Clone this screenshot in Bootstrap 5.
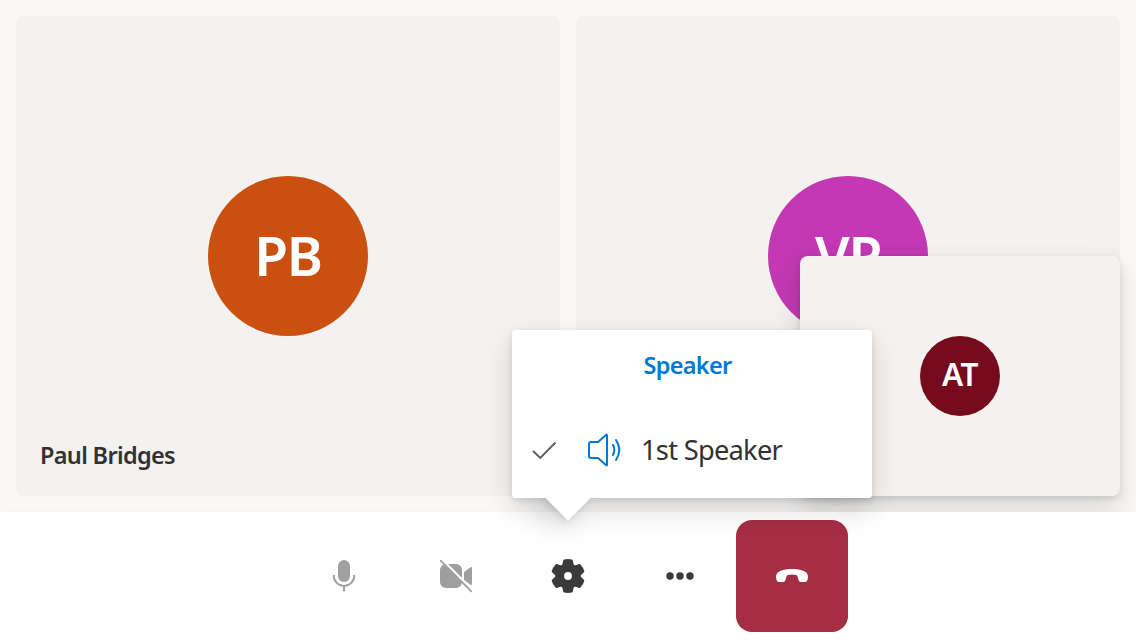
<!DOCTYPE html>
<html lang="en">
<head>
<meta charset="utf-8">
<meta name="viewport" content="width=device-width, initial-scale=1">
<title>Call</title>
<link href="https://cdn.jsdelivr.net/npm/bootstrap@5.3.0/dist/css/bootstrap.min.css" rel="stylesheet">
<style>
body{font-family:"Noto Sans","Open Sans",sans-serif;background:#faf9f8;color:#323130;line-height:1}
.stage{height:512px;padding:16px;gap:16px}
.tile{background:#f3f2f1;border-radius:8px}
.avatar{width:160px;height:160px;color:#fff;font-size:55px;font-weight:580;letter-spacing:-1.2px}
.avatar span{position:relative;top:-2px}
.avatar-pb{background:#ca5010}
.avatar-vp{background:#c239b3}
.avatar-at{background:#750b1c;width:80px;height:80px;font-size:31.5px;letter-spacing:-.5px}
.tile-name{left:24px;bottom:29px;font-size:23.5px;font-weight:560;letter-spacing:-.67px;white-space:nowrap}
.self-view{right:16px;top:256px;width:320px;height:240px;box-shadow:0 12.8px 28.8px rgba(0,0,0,.132),0 2.4px 7.2px rgba(0,0,0,.108)}
.controls{height:128px;background:#fff;box-shadow:0 6.4px 14.4px rgba(0,0,0,.06)}
.call-btn{width:112px;height:112px;border:0;border-radius:16px;background:none;padding:0}
.hangup{background:#a42e43}
.callout{left:512px;top:330px;width:360px;height:168px;background:#fff;border-radius:4px;box-shadow:0 12.8px 28.8px rgba(0,0,0,.132),0 2.4px 7.2px rgba(0,0,0,.108)}
.beak{width:32px;height:32px;left:40px;bottom:-16px;background:#fff;transform:rotate(45deg);box-shadow:inherit}
.callout-body{background:#fff;border-radius:4px}
.callout-title{height:72px;font-size:23.5px;font-weight:560;color:#0078d4;letter-spacing:-.7px;padding-right:9px}
.device{height:72px;margin-top:12px;font-size:27.3px;letter-spacing:-.75px}
.device span{padding-left:1px}
</style>
</head>
<body class="overflow-hidden">
<main class="position-relative vh-100 d-flex flex-column">
  <section class="stage d-flex">
    <div class="tile flex-fill d-flex align-items-center justify-content-center position-relative">
      <div class="avatar avatar-pb rounded-circle d-flex align-items-center justify-content-center"><span>PB</span></div>
      <div class="tile-name position-absolute">Paul Bridges</div>
    </div>
    <div class="tile flex-fill d-flex align-items-center justify-content-center">
      <div class="avatar avatar-vp rounded-circle d-flex align-items-center justify-content-center"><span>VP</span></div>
    </div>
  </section>
  <div class="tile self-view position-absolute d-flex align-items-center justify-content-center">
    <div class="avatar avatar-at rounded-circle d-flex align-items-center justify-content-center"><span>AT</span></div>
  </div>
  <nav class="controls position-relative d-flex align-items-center justify-content-center" aria-label="Call controls">
    <button class="call-btn d-flex align-items-center justify-content-center" aria-label="Microphone">
      <svg width="40" height="40" fill="#a19f9d"><rect x="14" y="4" width="12" height="22" rx="6"/><path d="M9.8 19v.7a10.2 10.2 0 0 0 20.4 0V19M20 30v5.6" fill="none" stroke="#a19f9d" stroke-width="1.9"/></svg>
    </button>
    <button class="call-btn d-flex align-items-center justify-content-center" aria-label="Camera">
      <svg width="40" height="40" fill="#a19f9d"><rect x="4" y="8" width="22" height="24" rx="6"/><path d="M28 16 34.5 11.2Q36 10.4 36 12V28Q36 29.6 34.5 28.8L28 24Z"/><path d="M6 4 37 35" stroke="#fff" stroke-width="3"/><path d="M4.7 4.7 35.3 35.3" stroke="#a19f9d" stroke-width="1.8" stroke-linecap="round"/></svg>
    </button>
    <button class="call-btn d-flex align-items-center justify-content-center" aria-label="Settings">
      <svg width="40" height="40" viewBox="-20 -20 40 40" fill="#3b3a39">
        <defs><path id="tooth" d="M-6.500-10.500Q-5.700-11.200-5.500-12.200L-4.800-15.600Q-4.600-16.400-3.800-16.600Q0-17.400 3.800-16.600Q4.600-16.400 4.800-15.600L5.500-12.200Q5.700-11.200 6.500-10.500V-8H-6.500Z"/></defs>
        <circle r="8" fill="none" stroke="#3b3a39" stroke-width="8.2"/>
        <use href="#tooth"/><use href="#tooth" transform="rotate(60)"/><use href="#tooth" transform="rotate(120)"/><use href="#tooth" transform="rotate(180)"/><use href="#tooth" transform="rotate(240)"/><use href="#tooth" transform="rotate(300)"/>
      </svg>
    </button>
    <button class="call-btn d-flex align-items-center justify-content-center" aria-label="More">
      <svg width="40" height="40" fill="#3b3a39"><circle cx="10" cy="20" r="3.7"/><circle cx="20" cy="20" r="3.7"/><circle cx="30" cy="20" r="3.7"/></svg>
    </button>
    <button class="call-btn hangup d-flex align-items-center justify-content-center" aria-label="Leave">
      <svg width="40" height="40" fill="#fff"><path d="M4 20.500C4 15.200 11.500 13 20 13S36 15.200 36 20.500C36 24 35 26 32.700 26H29Q27 26 26.500 24L25.600 20.500Q25.200 19.200 24 18.900Q20 18 16 18.900Q14.800 19.200 14.400 20.500L13.500 24Q13 26 11 26H7.300C5 26 4 24 4 20.500Z"/></svg>
    </button>
  </nav>
  <div class="callout position-absolute">
    <div class="beak position-absolute"></div>
    <div class="callout-body position-relative h-100">
      <div class="callout-title d-flex align-items-center justify-content-center">Speaker</div>
      <div class="device d-flex align-items-center">
        <svg width="128" height="40" fill="none"><path d="M21 21 28.300 28 43.500 12.500" stroke="#605e5c" stroke-width="1.9"/><g stroke="#0078d4" stroke-width="2" stroke-linejoin="round" stroke-linecap="round"><path d="M79 12H86L94 5Q95 4 95 5.500V34.500Q95 36 94 35L86 28H79Q77 28 77 26V14Q77 12 79 12Z"/><path d="M101 15Q103.700 20 101 25M104 10Q110.600 20 104 30"/></g></svg>
        <span>1st Speaker</span>
      </div>
    </div>
  </div>
</main>
<script src="https://cdn.jsdelivr.net/npm/bootstrap@5.3.0/dist/js/bootstrap.bundle.min.js"></script>
</body>
</html>
